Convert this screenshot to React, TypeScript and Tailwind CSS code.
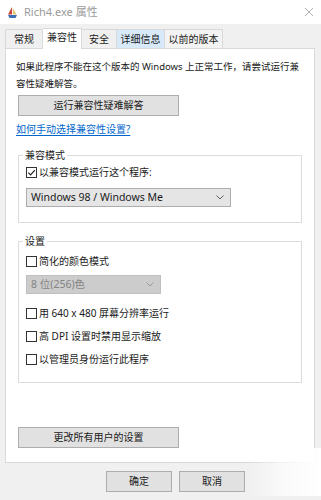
import React from "react";

const font = {
  fontFamily: '"Noto Sans", "Noto Sans CJK SC", sans-serif',
};

const Checkbox = ({ checked = false, label }: { checked?: boolean; label: string }) => (
  <div className="flex items-center h-[17px] ml-[7px]">
    <span className="w-[11px] h-[11px] border border-[#333] bg-white flex items-center justify-center shrink-0">
      {checked && (
        <svg width="9" height="9" viewBox="0 0 10 10">
          <path d="M1.5 5.2 L4 7.6 L8.7 2.3" fill="none" stroke="#222" strokeWidth="1.3" />
        </svg>
      )}
    </span>
    <span className="ml-[2px] text-[10px] text-[#1a1a1a] leading-[17px]">{label}</span>
  </div>
);

const Chevron = ({ color }: { color: string }) => (
  <svg width="8" height="5" viewBox="0 0 8 5">
    <path d="M0.5 0.5 L4 4 L7.5 0.5" fill="none" stroke={color} strokeWidth="1" />
  </svg>
);

const Group = ({ title, children, className }: { title: string; children: React.ReactNode; className?: string }) => (
  <fieldset className={"mx-[2px] border border-[#dcdcdc] px-0 " + (className ?? "")}>
    <legend className="ml-[4px] px-[2px] text-[10px] leading-[14px] text-[#1a1a1a]">{title}</legend>
    {children}
  </fieldset>
);

const tab = "h-[19px] flex items-center justify-center border-t border-r border-[#d9d9d9] text-[10px]";

export default function App() {
  return (
    <div className="relative w-[321px] h-[500px] bg-[#f0f0f0] overflow-hidden" style={font}>
      {/* title bar */}
      <div className="h-[24px] bg-white flex items-center pl-[6px] pr-[6px]">
        <svg width="13" height="13" viewBox="0 0 13 13">
          <path d="M2 9 L11 9 L9.5 12 L3.5 12 Z" fill="#3b6fb6" />
          <path d="M6 1 L6 8.5 L2 8.5 Z" fill="#c9443c" />
          <path d="M6.8 2 L6.8 8.5 L10.5 8.5 Z" fill="#e9c46a" />
        </svg>
        <span className="ml-[5px] text-[11px] text-[#9a9a9a]">Rich4.exe 属性</span>
        <div className="flex-1" />
        <svg width="10" height="10" viewBox="0 0 10 10" className="mr-[1px]">
          <path d="M1 1 L9 9 M9 1 L1 9" stroke="#b0b0b0" strokeWidth="1" />
        </svg>
      </div>

      {/* tabs */}
      <div className="flex items-end h-[24px] pl-[5px] text-[#1a1a1a]">
        <div className={tab + " w-[38px] border-l bg-[#f0f0f0]"}>常规</div>
        <div className="h-[21px] w-[39px] flex items-center justify-center border border-b-0 border-l-0 border-[#d9d9d9] bg-white relative top-[1px] z-10 pb-[3px] text-[10px]">兼容性</div>
        <div className={tab + " w-[35px] bg-[#f0f0f0]"}>安全</div>
        <div className={tab + " w-[48px] bg-[#d8eaf9]"}>详细信息</div>
        <div className={tab + " w-[58px] bg-[#f3f3f3]"}>以前的版本</div>
      </div>

      {/* panel */}
      <div className="ml-[5px] mr-[6px] h-[415px] bg-white border border-[#d9d9d9] px-[10px] flex flex-col">
        <p className="mt-[9px] text-[9.5px] leading-[17px] text-[#1a1a1a] whitespace-nowrap">
          如果此程序不能在这个版本的 Windows 上正常工作，请尝试运行兼
          <br />
          容性疑难解答。
        </p>
        <button className="mt-[3px] ml-[2px] w-[161px] h-[21px] bg-[#e1e1e1] border border-[#adadad] text-[10px] text-[#1a1a1a] flex items-center justify-center">
          运行兼容性疑难解答
        </button>
        <a className="mt-[5px] text-[10px] leading-[17px] text-[#0066cc] underline underline-offset-2 cursor-pointer w-fit">
          如何手动选择兼容性设置?
        </a>

        <Group title="兼容模式" className="mt-[10px] h-[75px]">
          <div className="mt-[2px]">
            <Checkbox checked label="以兼容模式运行这个程序:" />
          </div>
          <div className="mt-[7px] ml-[7px] w-[205px] h-[19px] bg-[#e5e5e5] border border-[#adadad] flex items-center pl-[4px] pr-[6px]">
            <span className="text-[10.5px] text-[#1a1a1a] flex-1">Windows 98 / Windows Me</span>
            <Chevron color="#606060" />
          </div>
        </Group>

        <Group title="设置" className="mt-[11px] h-[149px]">
          <div className="mt-[5px]">
            <Checkbox label="简化的颜色模式" />
          </div>
          <div className="mt-[5px] ml-[7px] w-[135px] h-[19px] bg-[#cccccc] border border-[#bfbfbf] flex items-center pl-[4px] pr-[6px]">
            <span className="text-[10.5px] text-[#838383] flex-1">8 位(256)色</span>
            <Chevron color="#9a9a9a" />
          </div>
          <div className="mt-[11px]">
            <Checkbox label="用 640 x 480 屏幕分辨率运行" />
          </div>
          <div className="mt-[6px]">
            <Checkbox label="高 DPI 设置时禁用显示缩放" />
          </div>
          <div className="mt-[6px]">
            <Checkbox label="以管理员身份运行此程序" />
          </div>
        </Group>

        <button className="mt-[44px] ml-[2px] w-[161px] h-[21px] bg-[#e1e1e1] border border-[#adadad] text-[10px] text-[#1a1a1a] flex items-center justify-center">
          更改所有用户的设置
        </button>
      </div>

      {/* dialog buttons */}
      <div className="flex gap-[7px] mt-[8px] ml-[106px]">
        <button className="w-[66px] h-[21px] bg-[#e1e1e1] border border-[#adadad] text-[10px] text-[#1a1a1a]">确定</button>
        <button className="w-[66px] h-[21px] bg-[#e1e1e1] border border-[#adadad] text-[10px] text-[#1a1a1a]">取消</button>
      </div>

      {/* watermark smudge */}
      <div className="absolute right-0 bottom-[4px] w-[72px] h-[48px] bg-gradient-to-l from-white via-white/70 to-transparent" />
    </div>
  );
}
